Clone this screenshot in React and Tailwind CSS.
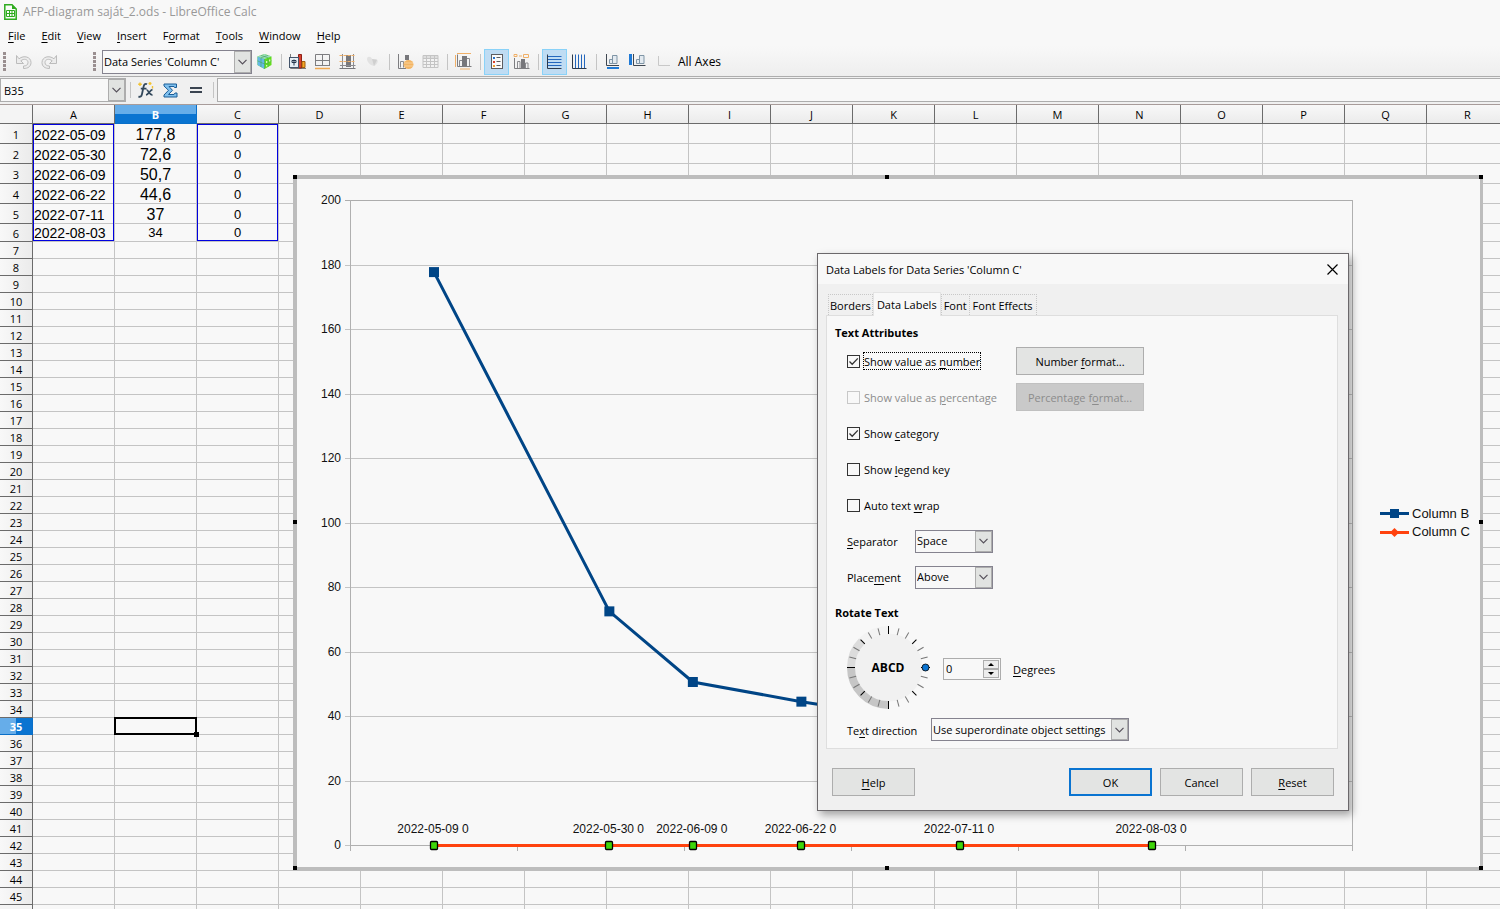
import React from "react";

const columns = "ABCDEFGHIJKLMNOPQR".split("");

const cells = [
  ["2022-05-09", "177,8", "0"],
  ["2022-05-30", "72,6", "0"],
  ["2022-06-09", "50,7", "0"],
  ["2022-06-22", "44,6", "0"],
  ["2022-07-11", "37", "0"],
  ["2022-08-03", "34", "0"],
];

// day is counted from the first measurement
const points = [
  { day: 0, value: 177.8, label: "2022-05-09 0" },
  { day: 21, value: 72.6, label: "2022-05-30 0" },
  { day: 31, value: 50.7, label: "2022-06-09 0" },
  { day: 44, value: 44.6, label: "2022-06-22 0" },
  { day: 63, value: 37, label: "2022-07-11 0" },
  { day: 86, value: 34, label: "2022-08-03 0" },
];

const menus = [
  ["", "F", "ile"],
  ["", "E", "dit"],
  ["", "V", "iew"],
  ["", "I", "nsert"],
  ["F", "o", "rmat"],
  ["", "T", "ools"],
  ["", "W", "indow"],
  ["", "H", "elp"],
];

const Mnemonic = ({ parts }) => (
  <span className="whitespace-pre">
    {parts[0]}
    <span className="underline underline-offset-2">{parts[1]}</span>
    {parts[2]}
  </span>
);

const Chevron = () => (
  <svg width="9" height="6" viewBox="0 0 9 6" fill="none" stroke="#55505a" strokeWidth="1.2">
    <path d="M0.5 0.8 L4.5 4.8 L8.5 0.8" />
  </svg>
);

const Dropdown = ({ id, label, value, className }) => (
  <div className={`relative ${className}`}>
    <select
      id={id}
      aria-label={label}
      className="h-full w-full appearance-none border border-[#85838f] bg-[#f8f8f8] pl-px pr-5 outline-none"
    >
      <option>{value}</option>
    </select>
    <span className="pointer-events-none absolute inset-y-px right-px flex w-[17px] items-center justify-center border border-[#adadad] bg-[#e1e3e1]">
      <Chevron />
    </span>
  </div>
);

const Icon = ({ children }) => (
  <svg width="17" height="17" viewBox="0 0 17 17" fill="none">
    {children}
  </svg>
);

const ToolButton = ({ label, active, children }) => (
  <button
    type="button"
    aria-label={label}
    className={`flex h-[26px] w-[25px] shrink-0 items-center justify-center ${
      active ? "border border-[#8ad2f8] bg-[#bfdcf3]" : ""
    }`}
  >
    {children}
  </button>
);

const Divider = () => (
  <span className="flex w-2 shrink-0 justify-center">
    <span className="h-4 w-px bg-[#c4c4c4]" />
  </span>
);

const Grip = () => (
  <svg width="3" height="19" viewBox="0 0 3 19" className="shrink-0">
    {[0, 4, 8, 12, 16].map((y) => (
      <rect key={y} y={y} width="3" height="3" fill="#9a8f90" />
    ))}
  </svg>
);

const UndoArrow = ({ flip }) => (
  <svg width="18" height="16" viewBox="0 0 18 16" fill="none" className={flip ? "-scale-x-100" : ""}>
    <path
      d="M1.5 1.5 V9.5 H8.5 L5.8 6.8 C9 4.2 13 5.2 13 8.6 C13 11 11 12 8.5 12 V14.5 C13 14.5 16 12.5 16 8.5 C16 3 9 0.8 4 4.8 Z"
      fill="#ececec"
      stroke="#bcbcbc"
    />
  </svg>
);

const DocIcon = () => (
  <svg width="13" height="16" viewBox="0 0 13 16" fill="none">
    <path d="M0.8 0.8 H8 L12.2 5 V15.2 H0.8 Z" fill="#f8fcf7" stroke="#2fab1f" strokeWidth="1.5" />
    <path d="M8 0.5 V5 H12.5 Z" fill="#2fab1f" />
    <path d="M2.5 6.5 H10.5 V12.5 H2.5 Z M2.5 9.5 H10.5 M5.5 6.5 V12.5 M8 6.5 V12.5" stroke="#2fab1f" />
  </svg>
);

const CubeIcon = () => (
  <Icon>
    <path d="M8.5 1 L15.5 3.5 V12 L8.5 16 L1.5 12 V3.5 Z" fill="#62dc1e" />
    <path d="M1.5 3.5 L8.5 6 V16 L1.5 12 Z" fill="#64b8e8" />
    <path d="M8.5 1 L15.5 3.5 L8.5 6 L1.5 3.5 Z" fill="#9bdcc0" />
    <path d="M1.5 7.8 L8.5 11 L15.5 7.8 M5 4.8 V14 M12 4.8 V14 M8.5 6 V16 M5 2.3 L12 4.8 M12 2.3 L5 4.8" stroke="#47a858" strokeWidth="0.6" />
    <path d="M10 8 H11.3 V10 H10 Z M13 6.5 H14.3 V8.5 H13 Z M10 12 H11.3 V13.5 H10 Z" fill="#d6f8b8" />
  </Icon>
);

const FormatSelectionIcon = () => (
  <Icon>
    <path d="M1.5 1 V15.5 H17" stroke="#7b7b7b" />
    <path d="M9.5 1.5 H12.5 V15 H9.5 Z" fill="#d8402e" stroke="#8d1f16" />
    <path d="M13 8.5 H16 V14.5 H13 Z" fill="#f5a623" stroke="#a05c10" />
    <rect x="0.5" y="4.5" width="9" height="10" fill="#e6eef4" stroke="#44546a" />
    <path d="M5 6.5 V12.5 M3 7.5 H7 V9.5 H3 Z" stroke="#27384e" />
  </Icon>
);

const TableIcon = () => (
  <Icon>
    <path d="M1.5 1.5 H15.5 V13 M1.5 1.5 V13 M8.5 1.5 V13 M1.5 7.5 H15.5 M1 12.5 H16" stroke="#7d7d80" />
    <path d="M1 15.5 H16" stroke="#f0a850" strokeWidth="1.5" />
  </Icon>
);

const ChartAreaIcon = () => (
  <Icon>
    <rect x="7" y="2" width="5" height="12" fill="#77777b" />
    <path d="M3.5 1 V15.5 M1 12.5 H16.5 M14.5 1 V15.5" stroke="#8b8b8f" />
    <path d="M0.5 2.5 H16.5 M0.5 8.5 H16.5" stroke="#f0b068" strokeDasharray="3 1" />
    <path d="M0.5 15.5 H16.5" stroke="#77777b" />
  </Icon>
);

const ChartTypeIcon = () => (
  <Icon>
    <path d="M3 6 C3 3 7 3 8 6 L12 6 C15 7 14 11 10 13 C6 12 3 9 3 6 Z" fill="#e2e2e2" />
    <path d="M8 6 L10 13 L13 7 Z" fill="#cfcfcf" />
  </Icon>
);

const DataRangeIcon = () => (
  <Icon>
    <path d="M1.5 1 V15.5 H9" stroke="#7d7d80" />
    <path d="M3.5 14.5 V8.5 H6.5 V14.5" stroke="#8b8b8f" />
    <rect x="8" y="2" width="4" height="5" fill="#77777b" />
    <ellipse cx="11.5" cy="11.5" rx="5" ry="4.5" fill="#f3b564" />
    <path d="M7 10 H16 M7 13 H16" stroke="#fad9a8" strokeWidth="0.8" />
  </Icon>
);

const DataTableIcon = () => (
  <Icon>
    <rect x="1" y="2" width="15" height="3" fill="#dedede" />
    <path d="M1 2.5 H16 V14.5 H1 Z M1 5.5 H16 M1 8.5 H16 M1 11.5 H16 M4.5 2.5 V14.5 M8.5 2.5 V14.5 M12.5 2.5 V14.5" stroke="#c4c4c4" />
  </Icon>
);

const TitlesIcon = () => (
  <Icon>
    <path d="M2 0.5 H16" stroke="#f0b068" />
    <path d="M0.5 2 V14 M5 16 H15" stroke="#f0b068" />
    <path d="M2.5 1.5 V13.5 H16.5" stroke="#7d7d80" />
    <path d="M4.5 13 V7.5 H7.5 V13 M11.5 13 V5.5 H14.5 V13" stroke="#8b8b8f" />
    <rect x="7" y="3" width="5" height="10" fill="#77777b" />
  </Icon>
);

const LegendIcon = () => (
  <Icon>
    <rect x="3.5" y="1.5" width="11" height="14" fill="#fafafa" stroke="#5c5c60" />
    <path d="M8.5 4.5 H12.5 M8.5 8.5 H12.5 M8.5 12.5 H12.5" stroke="#5c5c60" />
    <rect x="5" y="4" width="2" height="2" fill="#2a71c8" />
    <rect x="5" y="8" width="2" height="2" fill="#d8402e" />
    <rect x="5" y="12" width="2" height="2" fill="#f0a030" />
  </Icon>
);

const DataLabelsIcon = () => (
  <Icon>
    <path d="M1.5 5 V15.5 H16.5" stroke="#7d7d80" />
    <path d="M4.5 15 V8.5 H7 V15 M12.5 15 V10 H15 V15" stroke="#8b8b8f" />
    <rect x="8" y="6" width="4" height="9" fill="#77777b" />
    <path d="M1 1.5 H4 V3.5 H1 Z M6 3 H9 M10.5 1.5 H15.5 V4.5 H10.5 Z" stroke="#f0b068" />
  </Icon>
);

const HorizontalGridIcon = () => (
  <Icon>
    <path d="M2 3.5 H15.5 M2 6.5 H15.5 M2 9.5 H15.5 M2 12.5 H15.5" stroke="#2467bd" />
    <path d="M1.5 1.5 V15.5 H15.5" stroke="#2d3a4b" />
  </Icon>
);

const VerticalGridIcon = () => (
  <Icon>
    <path d="M4.5 1.5 V15 M7.5 1.5 V15 M10.5 1.5 V15 M13.5 1.5 V15" stroke="#2467bd" />
    <path d="M1.5 1.5 V15.5 H15.5" stroke="#2d3a4b" />
  </Icon>
);

const XAxisIcon = () => (
  <Icon>
    <path d="M2.5 1 V12.5 H15" stroke="#3e4650" />
    <path d="M5.5 10.5 V6.5 H8.5 V10.5 Z M8.5 10.5 V2.5 H13 V10.5 Z" stroke="#7f95a6" fill="#e3eaf0" />
    <rect x="3" y="14" width="12" height="2" fill="#1f7ad6" />
  </Icon>
);

const YAxisIcon = () => (
  <Icon>
    <path d="M4.5 1 V12.5 H16.5" stroke="#3e4650" />
    <path d="M7.5 10.5 V6.5 H10.5 V10.5 Z M10.5 10.5 V2.5 H15 V10.5 Z" stroke="#7f95a6" fill="#e3eaf0" />
    <rect x="0" y="1" width="3" height="11" fill="#1f7ad6" />
  </Icon>
);

const Toolbar = () => (
  <div className="flex h-[31px] shrink-0 items-center border-b border-[#adadad] bg-linear-to-b from-[#f8f8f8] to-[#eeeeee] pt-px pl-[3px]">
    <Grip />
    <button type="button" aria-label="Undo" className="ml-[9px]">
      <UndoArrow />
    </button>
    <button type="button" aria-label="Redo" className="ml-[7px]">
      <UndoArrow flip />
    </button>
    <span className="ml-[35px] mr-[6px] flex">
      <Grip />
    </span>
    <Dropdown label="Chart element" value="Data Series 'Column C'" className="h-6 w-[150px]" />
    <ToolButton label="Format selection">
      <CubeIcon />
    </ToolButton>
    <Divider />
    <ToolButton label="Chart type">
      <FormatSelectionIcon />
    </ToolButton>
    <ToolButton label="Chart area">
      <TableIcon />
    </ToolButton>
    <ToolButton label="Chart wall">
      <ChartAreaIcon />
    </ToolButton>
    <ToolButton label="3D view">
      <ChartTypeIcon />
    </ToolButton>
    <Divider />
    <ToolButton label="Data ranges">
      <DataRangeIcon />
    </ToolButton>
    <ToolButton label="Data table">
      <DataTableIcon />
    </ToolButton>
    <Divider />
    <ToolButton label="Titles">
      <TitlesIcon />
    </ToolButton>
    <Divider />
    <ToolButton label="Legend" active>
      <LegendIcon />
    </ToolButton>
    <ToolButton label="Data labels">
      <DataLabelsIcon />
    </ToolButton>
    <Divider />
    <ToolButton label="Horizontal grids" active>
      <HorizontalGridIcon />
    </ToolButton>
    <ToolButton label="Vertical grids">
      <VerticalGridIcon />
    </ToolButton>
    <Divider />
    <ToolButton label="X axis">
      <XAxisIcon />
    </ToolButton>
    <ToolButton label="Y axis">
      <YAxisIcon />
    </ToolButton>
    <button type="button" className="ml-2 flex items-center gap-2 text-[12px]">
      <svg width="12" height="12" viewBox="0 0 12 12" fill="none">
        <path d="M0.5 0 V9.5 H12" stroke="#c8c8c8" />
      </svg>
      All Axes
    </button>
  </div>
);

const FormulaBar = () => (
  <div className="flex h-[28px] shrink-0 items-start border-b border-[#a89c9a] bg-[#f0f0f0] pt-px">
    <div className="relative h-6 w-[126px] shrink-0">
      <input
        aria-label="Name Box"
        defaultValue="B35"
        className="h-full w-full border border-[#adadad] bg-[#f8f8f8] pt-px pl-[3px] outline-none"
      />
      <span className="pointer-events-none absolute inset-y-px right-px flex w-[17px] items-center justify-center border border-[#adadad] bg-[#e1e3e1]">
        <Chevron />
      </span>
    </div>
    <div className="flex h-6 w-[91px] shrink-0 items-center">
      <Divider />
      <button type="button" aria-label="Function Wizard" className="ml-[3px]">
        <svg width="18" height="18" viewBox="0 0 18 18" fill="none" stroke="#33485c">
          <path d="M10 3.2 C8.3 2.2 7 3.5 6.5 6 L5 13 C4.5 15.5 3.2 16.4 1.5 15.4 M3.8 7.6 H9.5" strokeWidth="1.8" />
          <path d="M9.5 9 C11.5 8.5 12 14.5 15.5 13.8 M15.5 8.6 C13 8.8 12 13.5 9 14" strokeWidth="1.7" />
          <path d="M3 1.5 V5 M1.2 3.2 H4.8 M13 1 V4 M11.5 2.5 H14.5 M15.5 5 V7.5" stroke="#f2c230" strokeWidth="1.4" />
        </svg>
      </button>
      <button type="button" aria-label="Select Function" className="ml-2">
        <svg width="15" height="15" viewBox="0 0 15 15">
          <path
            d="M1 1 H13.5 V4.5 H11.5 L11 3.5 H6 L9.5 7.3 L5.5 11.5 H11 L12 10 H14 V14 H1 V12 L5.5 7.3 L1 3 Z"
            fill="#7fc0ee"
            stroke="#1b5c96"
          />
        </svg>
      </button>
      <button type="button" aria-label="Formula" className="ml-3">
        <svg width="12" height="8" viewBox="0 0 12 8" fill="#3a4350">
          <rect y="1" width="12" height="2" />
          <rect y="5" width="12" height="2" />
        </svg>
      </button>
      <span className="ml-auto flex">
        <Divider />
      </span>
    </div>
    <input aria-label="Input line" className="h-6 min-w-0 flex-1 border border-r-0 border-[#adadad] bg-[#f8f8f8] outline-none" />
  </div>
);

const Sheet = () => {
  const rows = Array.from({ length: 45 }, (_, i) => i + 1);
  const cellStyles = ["pl-px text-left text-[14px]", "text-center text-base", "text-center text-[13px]"];

  return (
    <table className="w-[1509px] table-fixed border-separate border-spacing-0">
      <colgroup>
        <col className="w-[33px]" />
        {columns.map((c) => (
          <col key={c} className="w-[82px]" />
        ))}
      </colgroup>
      <thead>
        <tr className="h-[19px]">
          <th aria-label="Select all" className="border-r border-b border-[#6b6b6b] bg-[#f4f4f4] p-0" />
          {columns.map((c) => (
            <th
              key={c}
              className={`border-r border-b p-0 pt-[2px] leading-4 ${
                c === "B"
                  ? "border-[#0a6fc8] bg-linear-to-b from-[#66ade9] from-50% to-[#0a74d1] to-50% font-bold text-white"
                  : "border-[#6b6b6b] bg-linear-to-b from-[#f8f8f8] to-[#ebebeb] font-normal"
              }`}
            >
              {c}
            </th>
          ))}
        </tr>
      </thead>
      <tbody>
        {rows.map((n) => (
          <tr key={n} className={n < 6 ? "h-5" : n === 6 ? "h-[18px]" : "h-[17px]"}>
            <th
              className={`border-r border-b p-0 pt-[2px] leading-[14px] ${
                n === 35
                  ? "border-[#0a6fc8] bg-linear-to-r from-[#66ade9] from-50% to-[#0a74d1] to-50% font-bold text-white"
                  : "border-[#6b6b6b] bg-linear-to-r from-[#f8f8f8] to-[#ebebeb] font-normal"
              }`}
            >
              {n}
            </th>
            {columns.map((c, i) => (
              <td
                key={c}
                className={`overflow-hidden border-r border-b border-[#c4c4c4] p-0 font-['Liberation_Sans',sans-serif] leading-4 whitespace-nowrap ${
                  n < 6 ? "pt-[2px]" : ""
                } ${n === 6 && i === 1 ? "text-center text-[13px]" : cellStyles[i] || ""}`}
              >
                {cells[n - 1]?.[i]}
              </td>
            ))}
          </tr>
        ))}
        {/* the next row is only just in view */}
        <tr className="h-[17px]">
          <th aria-label="46" className="border-r border-[#6b6b6b] bg-[#f4f4f4] p-0" />
          {columns.map((c) => (
            <td key={c} className="border-r border-[#c4c4c4] p-0" />
          ))}
        </tr>
      </tbody>
    </table>
  );
};

const chartX = (day) => 141 + day * 8.35;
const chartY = (value) => 670 - value * 3.225;

const Chart = () => (
  <svg
    width="1190"
    height="696"
    viewBox="0 0 1190 696"
    fill="none"
    className="absolute top-[70px] left-[293px] font-['Liberation_Sans',sans-serif]"
  >
    <rect x="2" y="2" width="1187" height="692" fill="#f8f8f8" stroke="#bdbdbd" strokeWidth="4" />
    {Array.from({ length: 11 }, (_, i) => i * 20).map((v) => (
      <g key={v}>
        <path d={`M52 ${Math.round(chartY(v)) + 0.5} H1059`} stroke={v === 200 ? "#adadad" : "#c4c4c4"} />
        <text x="48" y={Math.round(chartY(v)) + 4} fill="#111" fontSize="12" textAnchor="end">
          {v}
        </text>
      </g>
    ))}
    {Array.from({ length: 7 }, (_, i) => i * 167).map((x) => (
      <path key={x} d={`M${57.5 + x} 670 V676`} stroke="#adadad" />
    ))}
    <path d="M57.5 25 V676 M1059.5 25 V676 M57 670.5 H1060" stroke="#b0b0b0" />

    <polyline
      points={points.map((p) => `${chartX(p.day)},${chartY(p.value) + 0.5}`).join(" ")}
      stroke="#004586"
      strokeWidth="3"
    />
    <path d={`M${chartX(0)} 670.5 H${chartX(86)}`} stroke="#ff420e" strokeWidth="3" />
    {points.map((p) => (
      <g key={p.day}>
        <rect x={chartX(p.day) - 5} y={chartY(p.value) - 4.5} width="10" height="10" fill="#004586" />
        <rect x={Math.round(chartX(p.day)) - 3.5} y="666.5" width="7" height="8" rx="1" fill="#3fd60a" stroke="#000" strokeWidth="1.3" />
        <text x={chartX(p.day) - 1} y="658" fill="#111" fontSize="12" textAnchor="middle">
          {p.label}
        </text>
      </g>
    ))}

    <path d="M1087 338.5 H1116" stroke="#004586" strokeWidth="3" />
    <rect x="1097" y="334" width="9" height="9" fill="#004586" />
    <path d="M1087 357.5 H1116" stroke="#ff420e" strokeWidth="3" />
    <path d="M1101.5 353 L1106 357.5 L1101.5 362 L1097 357.5 Z" fill="#ff420e" />
    <g fill="#111" fontSize="13">
      <text x="1119" y="343">
        Column B
      </text>
      <text x="1119" y="361">
        Column C
      </text>
    </g>

    <g fill="#000">
      <path d="M0 0 h4 v4 h-4 Z M592 0 h4 v4 h-4 Z M1186 0 h4 v4 h-4 Z" />
      <path d="M0 345 h4 v4 h-4 Z M1186 345 h4 v4 h-4 Z" />
      <path d="M0 691 h4 v4 h-4 Z M592 691 h4 v4 h-4 Z M1186 691 h4 v4 h-4 Z" />
    </g>
  </svg>
);

const Check = ({ id, parts, checked, disabled, focused }) => (
  <label htmlFor={id} className={`flex items-center gap-[3px] ${disabled ? "text-[#8c8c8c]" : ""}`}>
    <span className="relative flex">
      <input
        id={id}
        type="checkbox"
        defaultChecked={checked}
        disabled={disabled}
        className="peer size-[13px] appearance-none border border-[#333] bg-[#f8f8f8] disabled:border-[#c8c8c8]"
      />
      <svg
        className="pointer-events-none absolute inset-0 hidden peer-checked:block"
        width="13"
        height="13"
        viewBox="0 0 13 13"
        fill="none"
        stroke="#333"
        strokeWidth="1.3"
      >
        <path d="M2.5 6.5 L5.2 9.2 L10.8 3.4" />
      </svg>
    </span>
    <span className={`border border-dotted pt-px leading-[15px] ${focused ? "border-black" : "border-transparent"}`}>
      <Mnemonic parts={parts} />
    </span>
  </label>
);

const PushButton = ({ children, className }) => (
  <button type="button" className={`h-7 border pt-px ${className}`}>
    {children}
  </button>
);

const Dial = () => {
  const ticks = Array.from({ length: 24 }, (_, i) => i * 15).filter((a) => a !== 0);
  return (
    <svg width="83" height="83" viewBox="0 0 83 83" fill="none">
      <circle cx="41.5" cy="41.5" r="34" fill="#f1f1f1" />
      <path d="M41.5 79 A37.5 37.5 0 0 1 4 41.5" stroke="#c6c6c6" strokeWidth="8" />
      <path d="M4 41.5 A37.5 37.5 0 0 1 15 15" stroke="#dcdcdc" strokeWidth="8" />
      <path d="M15 15 A37.5 37.5 0 0 1 41.5 4" stroke="#f3f3f3" strokeWidth="8" />
      {ticks.map((a) => (
        <path
          key={a}
          d={a % 45 ? "M75 41.5 H82" : a % 90 ? "M75 41.5 H81" : "M75 41.5 H83"}
          stroke={a % 45 ? "#777" : "#000"}
          transform={`rotate(${a} 41.5 41.5)`}
        />
      ))}
      <path d="M74 41.5 H83" stroke="#000" />
      <circle cx="78.5" cy="41.5" r="3.5" fill="#0a74d1" stroke="#000" strokeWidth="0.8" />
      <text x="41" y="46" fill="#000" fontSize="12" fontWeight="700" textAnchor="middle">
        ABCD
      </text>
    </svg>
  );
};

const Dialog = () => (
  <div
    role="dialog"
    aria-labelledby="dialog-title"
    className="absolute top-[253px] left-[817px] w-[532px] border border-[#6b686b] bg-[#f0f0f0] shadow-[3px_4px_8px_rgba(0,0,0,0.35)]"
  >
    <div className="flex h-[30px] items-center justify-between bg-[#f8f8f8] pr-[10px] pl-2">
      <h1 id="dialog-title" className="pt-px">
        Data Labels for Data Series 'Column C'
      </h1>
      <button type="button" aria-label="Close">
        <svg width="11" height="11" viewBox="0 0 11 11" stroke="#000" strokeWidth="1.2">
          <path d="M0.5 0.5 L10.5 10.5 M10.5 0.5 L0.5 10.5" />
        </svg>
      </button>
    </div>

    <div className="px-2 pt-2">
      <div role="tablist" className="flex h-[23px] items-end pl-[2px]">
        <button type="button" role="tab" className="h-[21px] border border-b-0 border-dotted border-[#c8c8c8] px-px pt-px">
          Borders
        </button>
        <button
          type="button"
          role="tab"
          aria-selected="true"
          className="relative z-10 -mb-px h-6 border border-b-0 border-[#e4e4e4] bg-[#f8f8f8] px-[3px]"
        >
          Data Labels
        </button>
        <button type="button" role="tab" className="h-[21px] border border-b-0 border-dotted border-[#c8c8c8] px-[2px] pt-px">
          Font
        </button>
        <button type="button" role="tab" className="h-[21px] border border-b-0 border-l-0 border-dotted border-[#c8c8c8] px-[3px] pt-px">
          Font Effects
        </button>
      </div>

      <div className="mr-[2px] border border-[#dedede] bg-[#f8f8f8] px-2 pt-2 pb-[7px]">
        <h2 className="leading-[18px] font-bold">Text Attributes</h2>
        <div className="mt-[5px] grid auto-rows-[28px] grid-cols-[169px_128px] items-center gap-y-2 pl-3">
          <Check id="as-number" parts={["Show value as ", "n", "umber"]} checked focused />
          <PushButton className="border-[#adadad] bg-[#e3e4e3]">
            <Mnemonic parts={["Number ", "f", "ormat..."]} />
          </PushButton>
          <Check id="as-percentage" parts={["Show value as ", "p", "ercentage"]} disabled />
          <button type="button" disabled className="h-7 border border-[#c0c0c0] bg-[#c9c9c9] pt-px text-[#8c8c8c]">
            <Mnemonic parts={["Percentage f", "o", "rmat..."]} />
          </button>
          <div className="col-span-2">
            <Check id="category" parts={["Show ", "c", "ategory"]} checked />
          </div>
          <div className="col-span-2">
            <Check id="legend-key" parts={["Show ", "l", "egend key"]} />
          </div>
          <div className="col-span-2">
            <Check id="text-wrap" parts={["Auto text ", "w", "rap"]} />
          </div>
          <div className="col-span-2 flex items-center">
            <label htmlFor="separator" className="w-[68px] pt-[2px]">
              <Mnemonic parts={["", "S", "eparator"]} />
            </label>
            <Dropdown id="separator" value="Space" className="h-[23px] w-[78px]" />
          </div>
          <div className="col-span-2 flex items-center">
            <label htmlFor="placement" className="w-[68px] pt-[2px]">
              <Mnemonic parts={["Place", "m", "ent"]} />
            </label>
            <Dropdown id="placement" value="Above" className="h-[23px] w-[78px]" />
          </div>
        </div>

        <h2 className="mt-[13px] leading-[18px] font-bold">Rotate Text</h2>
        <div className="mt-1 flex items-center pl-3">
          <Dial />
          <div className="flex items-center gap-3 pt-[3px] pl-[13px]">
            <div className="flex h-[22px] w-[58px] border border-[#adadad] bg-[#f8f8f8] p-px">
              <input
                id="degrees"
                type="text"
                inputMode="numeric"
                defaultValue="0"
                className="min-w-0 flex-1 bg-transparent pl-px outline-none"
              />
              <div className="flex w-4 flex-col">
                <button type="button" aria-label="Increase" className="flex flex-1 items-center justify-center border border-[#adadad] bg-[#ededed]">
                  <svg width="6" height="3" viewBox="0 0 6 3">
                    <path d="M3 0 L6 3 H0 Z" fill="#000" />
                  </svg>
                </button>
                <button type="button" aria-label="Decrease" className="flex flex-1 items-center justify-center border border-[#adadad] bg-[#ededed]">
                  <svg width="6" height="3" viewBox="0 0 6 3">
                    <path d="M3 3 L6 0 H0 Z" fill="#000" />
                  </svg>
                </button>
              </div>
            </div>
            <label htmlFor="degrees" className="pt-[2px]">
              <Mnemonic parts={["", "D", "egrees"]} />
            </label>
          </div>
        </div>
        <div className="mt-[9px] flex items-center pl-3">
          <label htmlFor="direction" className="w-[84px] pt-[2px]">
            <Mnemonic parts={["Te", "x", "t direction"]} />
          </label>
          <Dropdown id="direction" value="Use superordinate object settings" className="h-[23px] w-[198px]" />
        </div>
      </div>
    </div>

    <div className="flex gap-2 px-[14px] pt-[19px] pb-[14px]">
      <PushButton className="mr-auto w-[83px] border-[#adadad] bg-[#e3e4e3]">
        <Mnemonic parts={["", "H", "elp"]} />
      </PushButton>
      <PushButton className="w-[83px] border-2 border-[#0a74d1] bg-[#e3e4e3]">OK</PushButton>
      <PushButton className="w-[83px] border-[#adadad] bg-[#e3e4e3]">Cancel</PushButton>
      <PushButton className="w-[83px] border-[#adadad] bg-[#e3e4e3]">
        <Mnemonic parts={["", "R", "eset"]} />
      </PushButton>
    </div>
  </div>
);

const App = () => {
  return (
    <div className="relative flex h-screen flex-col overflow-hidden bg-[#f8f8f8] font-['Open_Sans','Noto_Sans',sans-serif] text-[11px] leading-4 text-black">
      <header className="flex h-6 shrink-0 items-center gap-[6px] pl-1 text-[12px] text-[#999]">
        <DocIcon />
        AFP-diagram saját_2.ods - LibreOffice Calc
      </header>
      <nav className="flex h-[22px] shrink-0 items-center gap-4 pt-px pl-2">
        {menus.map((m) => (
          <button key={m.join("")} type="button">
            <Mnemonic parts={m} />
          </button>
        ))}
      </nav>
      <Toolbar />
      <FormulaBar />
      <main className="relative min-h-0 flex-1 overflow-hidden">
        <Sheet />
        {/* source ranges of the selected series */}
        <div className="pointer-events-none absolute top-[19px] left-[33px] h-[117px] w-[81px] border border-[#0000e0]" />
        <div className="pointer-events-none absolute top-[19px] left-[197px] h-[117px] w-[81px] border border-[#0000e0]" />
        {/* cell cursor */}
        <div className="pointer-events-none absolute top-[612px] left-[114px] h-[18px] w-[83px] border-2 border-black">
          <span className="absolute -right-1 -bottom-1 size-[5px] bg-black" />
        </div>
        <Chart />
      </main>
      <Dialog />
    </div>
  );
};

export default App;
